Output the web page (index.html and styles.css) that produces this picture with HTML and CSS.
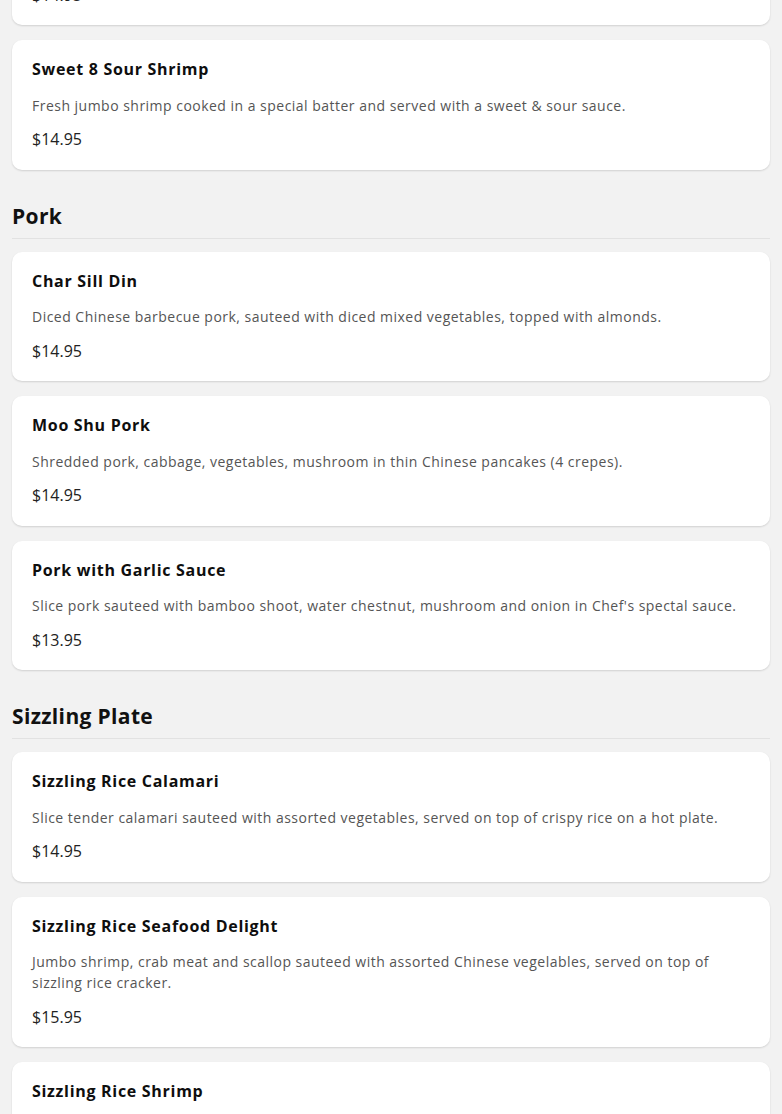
FILE: index.html
```html
<!DOCTYPE html>
<html lang="en">
<head>
<meta charset="utf-8">
<title>Menu</title>
<link rel="stylesheet" href="styles.css">
</head>
<body>
<main class="menu">
  <section class="section section-first">
    <div class="cards">
      <article class="card">
        <h3 class="item-name">Shrimp with Lobster Sauce</h3>
        <p class="item-desc">Jumbo shrimp sauteed in lobster sauce with egg and minced pork.</p>
        <p class="item-price">$14.95</p>
      </article>
      <article class="card">
        <h3 class="item-name">Sweet 8 Sour Shrimp</h3>
        <p class="item-desc">Fresh jumbo shrimp cooked in a special batter and served with a sweet &amp; sour sauce.</p>
        <p class="item-price">$14.95</p>
      </article>
    </div>
  </section>

  <section class="section">
    <h2 class="section-title">Pork</h2>
    <div class="cards">
      <article class="card">
        <h3 class="item-name">Char Sill Din</h3>
        <p class="item-desc">Diced Chinese barbecue pork, sauteed with diced mixed vegetables, topped with almonds.</p>
        <p class="item-price">$14.95</p>
      </article>
      <article class="card">
        <h3 class="item-name">Moo Shu Pork</h3>
        <p class="item-desc">Shredded pork, cabbage, vegetables, mushroom in thin Chinese pancakes (4 crepes).</p>
        <p class="item-price">$14.95</p>
      </article>
      <article class="card">
        <h3 class="item-name">Pork with Garlic Sauce</h3>
        <p class="item-desc">Slice pork sauteed with bamboo shoot, water chestnut, mushroom and onion in Chef's spectal sauce.</p>
        <p class="item-price">$13.95</p>
      </article>
    </div>
  </section>

  <section class="section">
    <h2 class="section-title">Sizzling Plate</h2>
    <div class="cards">
      <article class="card">
        <h3 class="item-name">Sizzling Rice Calamari</h3>
        <p class="item-desc">Slice tender calamari sauteed with assorted vegetables, served on top of crispy rice on a hot plate.</p>
        <p class="item-price">$14.95</p>
      </article>
      <article class="card">
        <h3 class="item-name">Sizzling Rice Seafood Delight</h3>
        <p class="item-desc">Jumbo shrimp, crab meat and scallop sauteed with assorted Chinese vegelables, served on top of sizzling rice cracker.</p>
        <p class="item-price">$15.95</p>
      </article>
      <article class="card">
        <h3 class="item-name">Sizzling Rice Shrimp</h3>
        <p class="item-desc">Jumbo shrimp sauteed with assorted vegetables, served on top of crispy rice on a hot plate.</p>
        <p class="item-price">$14.95</p>
      </article>
    </div>
  </section>
</main>
</body>
</html>
```

FILE: styles.css
```css
html, body {
  margin: 0;
  padding: 0;
  background: #f2f2f2;
}

body {
  font-family: "Open Sans", "DejaVu Sans", sans-serif;
  color: #111;
  overflow: hidden;
}

.menu {
  padding: 0 12px;
  margin-top: -104.5px;
}

.section {
  margin-top: 34px;
}

.section-first {
  margin-top: 0;
}

.section-title {
  margin: 0 0 13px;
  padding-bottom: 10px;
  border-bottom: 1px solid #e2e2e2;
  font-size: 21px;
  line-height: 24px;
  font-weight: 700;
  letter-spacing: 0.35px;
  color: #111;
}

.cards {
  display: flex;
  flex-direction: column;
  gap: 15px;
}

.card {
  background: #fff;
  border-radius: 10px;
  padding: 20px;
  box-shadow: 0 1px 2px rgba(0, 0, 0, 0.14);
}

.item-name {
  margin: 0;
  font-size: 16px;
  line-height: 19px;
  font-weight: 700;
  letter-spacing: 0.7px;
  color: #0e0e0e;
}

.item-desc {
  margin: 15.5px 0 0;
  font-size: 14px;
  line-height: 21px;
  letter-spacing: 0.48px;
  color: #555;
}

.item-price {
  margin: 14.5px 0 0;
  font-size: 16px;
  line-height: 19.5px;
  color: #222;
}
```
